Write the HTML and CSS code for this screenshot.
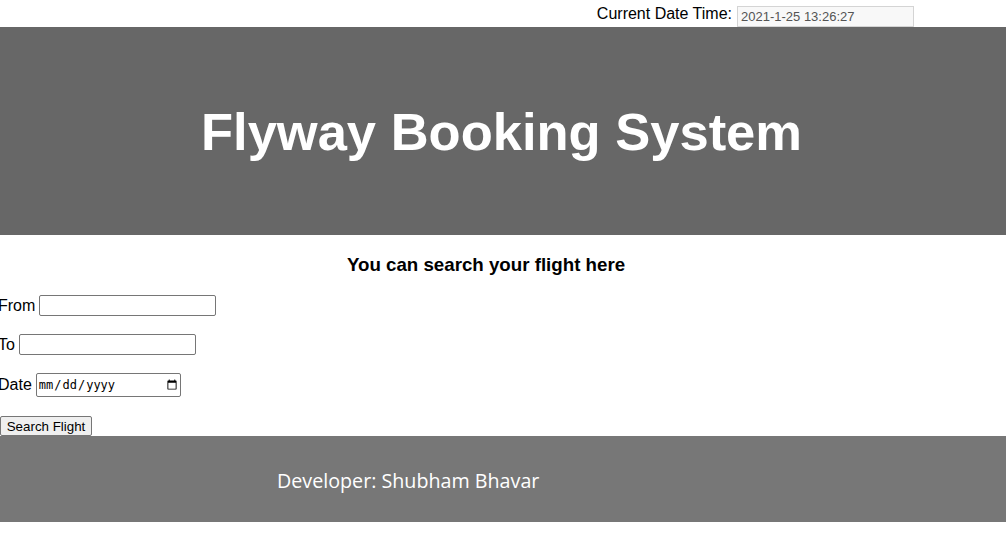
FILE: index.html
```html
<!DOCTYPE html>
<html>
<head>
<meta charset="utf-8">
<title>Flyway Booking System</title>
<link rel="stylesheet" href="styles.css">
</head>
<body>
<div class="topbar">
  <label class="dt-label">Current Date Time:</label>
  <input class="dt-input" type="text" value="2021-1-25 13:26:27" readonly>
</div>
<header class="hero">
  <h1 class="hero-title">Flyway Booking System</h1>
</header>
<main class="search">
  <h3 class="search-title">You can search your flight here</h3>
  <form class="search-form">
    <p class="row"><label>From</label> <input class="txt from" type="text"></p>
    <p class="row"><label>To</label> <input class="txt to" type="text"></p>
    <p class="row row-date"><label>Date</label> <input class="date" type="date"></p>
    <button class="btn" type="button">Search Flight</button>
  </form>
</main>
<footer class="footer">
  <span class="dev">Developer: Shubham Bhavar</span>
</footer>
</body>
</html>
```
FILE: styles.css
```css
html, body {
  margin: 0;
  padding: 0;
  background: #fff;
}
body {
  font-family: "Liberation Sans", Arial, sans-serif;
  font-size: 16px;
  color: #000;
}
.topbar {
  height: 27px;
  display: flex;
  justify-content: flex-end;
  align-items: center;
  padding-right: 92px;
  box-sizing: border-box;
}
.dt-label {
  margin-right: 5px;
}
.dt-input {
  width: 177px;
  height: 21px;
  box-sizing: border-box;
  border: 1px solid #d4d4d4;
  background: #f8f8f8;
  font-family: "Liberation Sans", Arial, sans-serif;
  font-size: 13px;
  color: #545454;
  padding: 1px 3px;
  margin-top: 5px;
}
.hero {
  background: #676767;
  height: 208px;
  display: flex;
  align-items: center;
  justify-content: center;
}
.hero-title {
  margin: 0;
  color: #fff;
  font-size: 52.5px;
  font-weight: bold;
  padding-right: 3px;
}
.search-title {
  text-align: center;
  font-size: 18.72px;
  margin: 19px 34px 18px 0;
}
.search-form {
  margin: 0;
}
.row {
  margin: 0 0 16px -2px;
  height: 23px;
  display: flex;
  align-items: center;
  gap: 4px;
}
.row-date {
  height: 26px;
  margin-bottom: 18px;
}
.txt {
  width: 177px;
  height: 21px;
  box-sizing: border-box;
  border: 1px solid #767676;
  border-radius: 2px;
}
.date {
  width: 145px;
  height: 24px;
  box-sizing: border-box;
  border: 1px solid #767676;
  border-radius: 2px;
  font-family: "DejaVu Sans Mono", monospace;
  font-size: 12px;
}
.btn {
  font-family: "Liberation Sans", Arial, sans-serif;
  font-size: 13.33px;
  width: 92px;
  height: 20px;
  padding: 1px 5px;
  border: 1px solid #767676;
  border-radius: 2px;
  background: #efefef;
  display: block;
}
.footer {
  background: #777777;
  height: 86px;
  display: flex;
  align-items: center;
  padding-left: 277px;
}
.dev {
  color: #fff;
  font-family: "Open Sans", "Noto Sans", sans-serif;
  font-size: 19.7px;
  margin-top: 2px;
}
```
